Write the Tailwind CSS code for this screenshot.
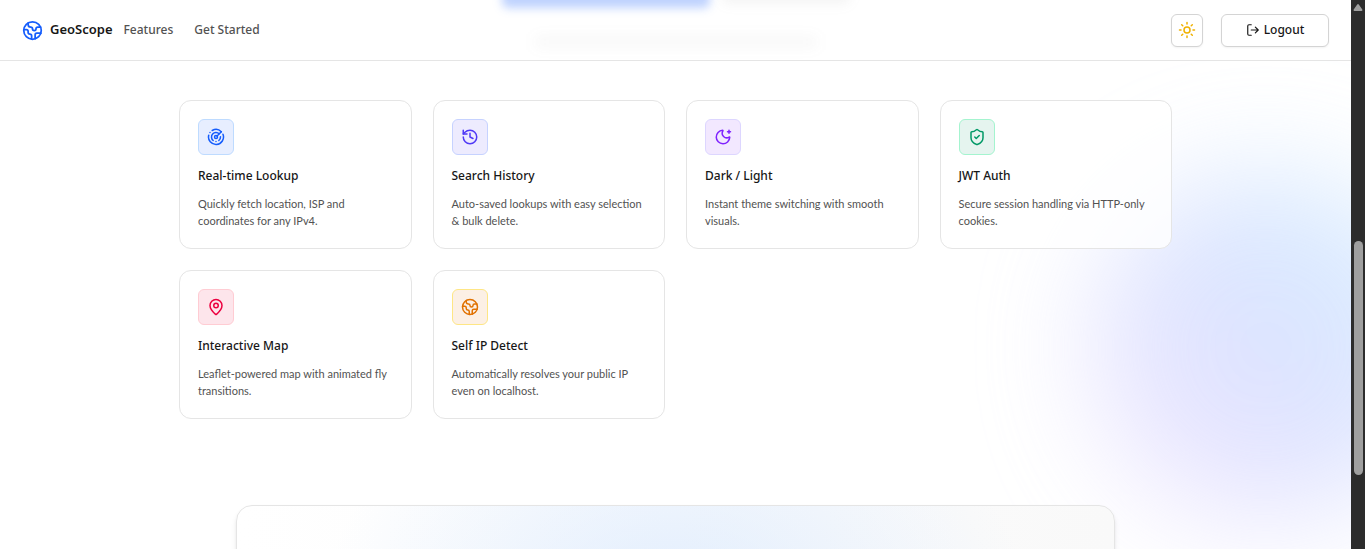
<!DOCTYPE html>
<html lang="en">
<head>
<meta charset="utf-8">
<meta name="viewport" content="width=device-width, initial-scale=1">
<title>GeoScope</title>
<script src="https://cdn.jsdelivr.net/npm/@tailwindcss/browser@4"></script>
</head>
<body class="flex h-screen overflow-hidden bg-white font-['Noto_Sans','Open_Sans',sans-serif] text-neutral-900">
<svg class="hidden" aria-hidden="true">
  <symbol id="earth" viewBox="0 0 24 24"><path d="M21.54 15H17a2 2 0 0 0-2 2v4.54"/><path d="M7 3.34V5a3 3 0 0 0 3 3a2 2 0 0 1 2 2c0 1.1.9 2 2 2a2 2 0 0 0 2-2c0-1.1.9-2 2-2h3.17"/><path d="M11 21.95V18a2 2 0 0 0-2-2a2 2 0 0 1-2-2v-1a2 2 0 0 0-2-2H2.05"/><circle cx="12" cy="12" r="10"/></symbol>
</svg>
<div class="relative isolate flex h-full min-w-0 flex-1 flex-col overflow-hidden">
  <!-- ambient glow -->
  <div class="absolute top-[172px] right-[-90px] -z-10 size-[350px] rounded-full bg-linear-to-tr from-purple-200 via-indigo-200 to-sky-200 opacity-60 blur-[56px]" aria-hidden="true"></div>

  <header class="relative shrink-0 overflow-hidden border-b border-neutral-200 bg-white">
    <!-- hero content softened behind the bar -->
    <div class="absolute inset-0 flex justify-center" aria-hidden="true">
      <div class="relative w-[351px]">
        <div class="absolute -top-7 left-0.5 h-9 w-[208px] rounded-md bg-blue-600/28 blur-[5px]"></div>
        <div class="absolute -top-8 left-[222px] h-9 w-[128px] rounded-md bg-neutral-500/8 blur-[6px]"></div>
        <div class="absolute top-[38px] left-[36px] h-2 w-[280px] bg-neutral-500/8 blur-[7px]"></div>
      </div>
    </div>
    <div class="relative flex h-[60px] items-center justify-between px-[22px]">
      <nav class="flex items-center text-xs font-medium text-neutral-600" aria-label="Main">
        <a href="#" class="mr-[11px] flex items-center gap-[7px] text-[13px] font-semibold text-neutral-900">
          <svg class="size-[21px] fill-none stroke-blue-600 stroke-2 [stroke-linecap:round] [stroke-linejoin:round]" aria-hidden="true"><use href="#earth"/></svg>
          GeoScope
        </a>
        <a href="#features" class="mr-[21px]">Features</a>
        <a href="#start">Get Started</a>
      </nav>
      <div class="flex items-center gap-[18px]">
        <button type="button" aria-label="Toggle theme" class="flex h-[33px] w-8 items-center justify-center rounded-md border border-neutral-300 bg-white shadow-xs">
          <svg viewBox="0 0 24 24" class="size-[18px] fill-none stroke-yellow-500 stroke-2 [stroke-linecap:round]"><circle cx="12" cy="12" r="4"/><path d="M12 2v2M12 20v2M4.93 4.93l1.41 1.41M17.66 17.66l1.41 1.41M2 12h2M20 12h2M6.34 17.66l-1.41 1.41M19.07 4.93l-1.41 1.41"/></svg>
        </button>
        <button type="button" class="flex h-[33px] w-[108px] items-center justify-center gap-1 rounded-md border border-neutral-300 bg-white text-xs font-medium shadow-xs">
          <svg viewBox="0 0 24 24" class="size-[14px] fill-none stroke-current stroke-2 [stroke-linecap:round] [stroke-linejoin:round]" aria-hidden="true"><path d="M9 21H5a2 2 0 0 1-2-2V5a2 2 0 0 1 2-2h4M16 17l5-5-5-5M21 12H9"/></svg>
          Logout
        </button>
      </div>
    </div>
  </header>

  <main class="px-[22px] pt-[39px]">
    <section id="features" class="mx-auto grid max-w-[993px] grid-cols-4 gap-[21px]">
      <article class="rounded-xl border border-neutral-200 bg-white/80 p-[18px]">
        <div class="flex size-9 items-center justify-center rounded-md border border-blue-200 bg-blue-600/10">
          <svg viewBox="0 0 24 24" class="size-[18px] fill-none stroke-blue-600 stroke-2 [stroke-linecap:round] [stroke-linejoin:round]" aria-hidden="true"><path d="M19.07 4.93A10 10 0 0 0 6.99 3.34"/><path d="M4 6h.01"/><path d="M2.29 9.62A10 10 0 1 0 21.31 8.35"/><path d="M16.24 7.76A6 6 0 1 0 8.23 16.67"/><path d="M12 18h.01"/><path d="M17.99 11.66A6 6 0 0 1 15.77 16.67"/><circle cx="12" cy="12" r="2"/><path d="m13.41 10.59 5.66-5.66"/></svg>
        </div>
        <h3 class="mt-3 text-xs leading-[18px] font-medium">Real-time Lookup</h3>
        <p class="mt-2.5 mb-px font-[Lato,sans-serif] text-[11px] leading-[17px] text-neutral-600">Quickly fetch location, ISP and coordinates for any IPv4.</p>
      </article>
      <article class="rounded-xl border border-neutral-200 bg-white/80 p-[18px]">
        <div class="flex size-9 items-center justify-center rounded-md border border-indigo-200 bg-indigo-600/10">
          <svg viewBox="0 0 24 24" class="size-[18px] fill-none stroke-indigo-600 stroke-2 [stroke-linecap:round] [stroke-linejoin:round]" aria-hidden="true"><path d="M3 12a9 9 0 1 0 9-9 9.75 9.75 0 0 0-6.74 2.74L3 8"/><path d="M3 3v5h5"/><path d="M12 7v5l4 2"/></svg>
        </div>
        <h3 class="mt-3 text-xs leading-[18px] font-medium">Search History</h3>
        <p class="mt-2.5 mb-px font-[Lato,sans-serif] text-[11px] leading-[17px] text-neutral-600">Auto-saved lookups with easy selection &amp; bulk delete.</p>
      </article>
      <article class="rounded-xl border border-neutral-200 bg-white/80 p-[18px]">
        <div class="flex size-9 items-center justify-center rounded-md border border-violet-200 bg-violet-600/10">
          <svg viewBox="0 0 24 24" class="size-[18px] fill-none stroke-violet-600 stroke-2 [stroke-linecap:round] [stroke-linejoin:round]" aria-hidden="true"><path d="M18 5h4M20 3v4"/><path d="M20.985 12.486a9 9 0 1 1-9.473-9.472c.405-.022.617.46.402.803a6 6 0 0 0 8.268 8.268c.344-.215.825-.004.803.401"/></svg>
        </div>
        <h3 class="mt-3 text-xs leading-[18px] font-medium">Dark / Light</h3>
        <p class="mt-2.5 mb-px font-[Lato,sans-serif] text-[11px] leading-[17px] text-neutral-600">Instant theme switching with smooth visuals.</p>
      </article>
      <article class="rounded-xl border border-neutral-200 bg-white/80 p-[18px]">
        <div class="flex size-9 items-center justify-center rounded-md border border-emerald-200 bg-emerald-600/10">
          <svg viewBox="0 0 24 24" class="size-[18px] fill-none stroke-emerald-600 stroke-2 [stroke-linecap:round] [stroke-linejoin:round]" aria-hidden="true"><path d="M20 13c0 5-3.5 7.5-7.66 8.95a1 1 0 0 1-.67-.01C7.5 20.5 4 18 4 13V6a1 1 0 0 1 1-1c2 0 4.5-1.2 6.24-2.72a1.17 1.17 0 0 1 1.52 0C14.51 3.81 17 5 19 5a1 1 0 0 1 1 1z"/><path d="m9 12 2 2 4-4"/></svg>
        </div>
        <h3 class="mt-3 text-xs leading-[18px] font-medium">JWT Auth</h3>
        <p class="mt-2.5 mb-px font-[Lato,sans-serif] text-[11px] leading-[17px] text-neutral-600">Secure session handling via HTTP-only cookies.</p>
      </article>
      <article class="rounded-xl border border-neutral-200 bg-white/80 p-[18px]">
        <div class="flex size-9 items-center justify-center rounded-md border border-rose-200 bg-rose-600/10">
          <svg viewBox="0 0 24 24" class="size-[18px] fill-none stroke-rose-600 stroke-2 [stroke-linecap:round] [stroke-linejoin:round]" aria-hidden="true"><path d="M20 10c0 4.993-5.539 10.193-7.399 11.799a1 1 0 0 1-1.202 0C9.539 20.193 4 14.993 4 10a8 8 0 0 1 16 0"/><circle cx="12" cy="10" r="3"/></svg>
        </div>
        <h3 class="mt-3 text-xs leading-[18px] font-medium">Interactive Map</h3>
        <p class="mt-2.5 mb-px font-[Lato,sans-serif] text-[11px] leading-[17px] text-neutral-600">Leaflet-powered map with animated fly transitions.</p>
      </article>
      <article class="rounded-xl border border-neutral-200 bg-white/80 p-[18px]">
        <div class="flex size-9 items-center justify-center rounded-md border border-amber-200 bg-amber-600/10">
          <svg class="size-[18px] fill-none stroke-amber-600 stroke-2 [stroke-linecap:round] [stroke-linejoin:round]" aria-hidden="true"><use href="#earth"/></svg>
        </div>
        <h3 class="mt-3 text-xs leading-[18px] font-medium">Self IP Detect</h3>
        <p class="mt-2.5 mb-px font-[Lato,sans-serif] text-[11px] leading-[17px] text-neutral-600">Automatically resolves your public IP even on localhost.</p>
      </article>
    </section>

    <section id="start" class="mx-auto mt-[86px] h-60 max-w-[879px] rounded-2xl border border-neutral-200 bg-[radial-gradient(ellipse_350px_220px_at_50%_90px,#dbeafecc,#dbeafe00),linear-gradient(to_right,#ffffff,#f9f9f9)] shadow-md" aria-label="Get started"></section>
  </main>
</div>

<!-- scroll track -->
<div class="flex w-[14px] shrink-0 flex-col items-center bg-[#2c2c2c] pt-1" aria-hidden="true">
  <svg viewBox="0 0 10 7" class="h-[7px] w-[10px] fill-[#9f9f9f]"><path d="M4.2.6a1 1 0 0 1 1.6 0L9.3 5.6A.9.9 0 0 1 8.6 7H1.4A.9.9 0 0 1 .7 5.6z"/></svg>
  <div class="mt-[230px] h-[234px] w-[9px] rounded-full bg-[#9f9f9f]"></div>
</div>
</body>
</html>
